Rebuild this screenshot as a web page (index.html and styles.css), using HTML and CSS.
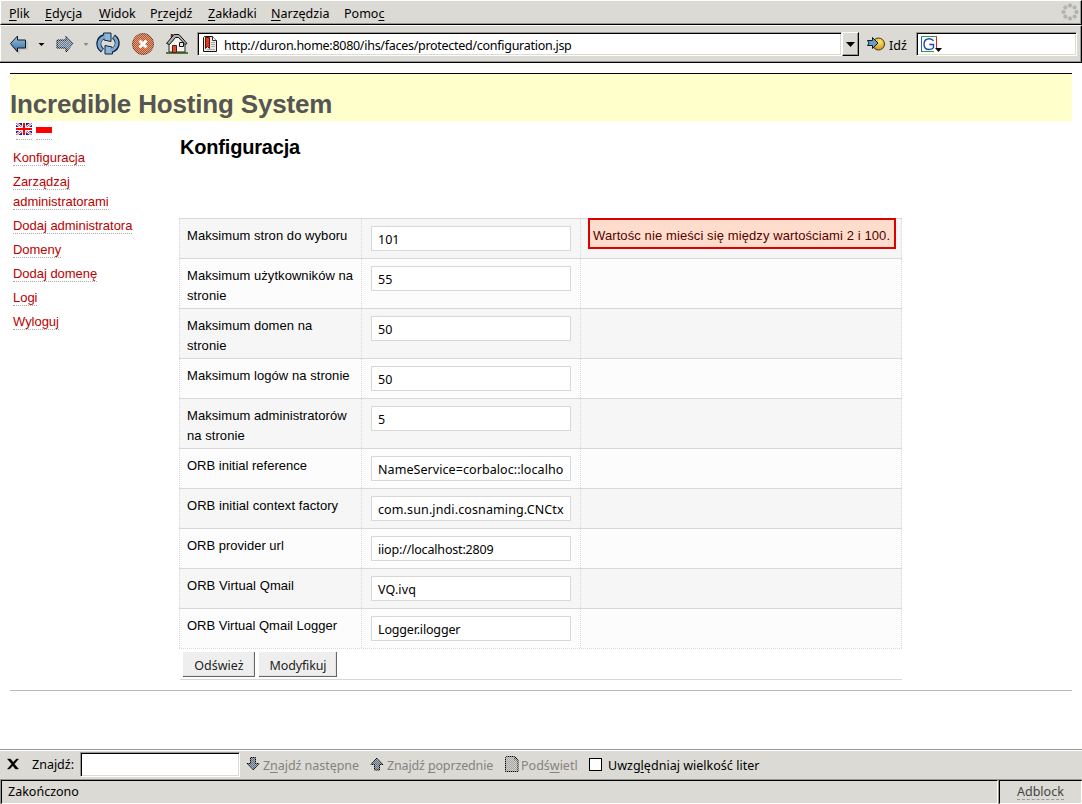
FILE: index.html
```html
<!DOCTYPE html>
<html lang="pl">
<head>
<meta charset="utf-8">
<title>Incredible Hosting System</title>
<link rel="stylesheet" href="styles.css">
</head>
<body>
<nav class="menubar">
  <span class="m1"><u>P</u>lik</span><span class="m2"><u>E</u>dycja</span><span class="m3"><u>W</u>idok</span><span class="m4">P<u>r</u>zejdź</span><span class="m5"><u>Z</u>akładki</span><span class="m6"><u>N</u>arzędzia</span><span class="m7">Pomo<u>c</u></span>
  <svg class="throbber" width="18" height="18" viewBox="0 0 18 18" fill="#b6b6b3" stroke="#a5a5a2" stroke-width=".6"><circle cx="9" cy="2.500" r="1.700"/><circle cx="13.600" cy="4.400" r="1.700"/><circle cx="15.500" cy="9" r="1.700"/><circle cx="13.600" cy="13.600" r="1.700"/><circle cx="9" cy="15.500" r="1.700"/><circle cx="4.400" cy="13.600" r="1.700"/><circle cx="2.500" cy="9" r="1.700"/><circle cx="4.400" cy="4.400" r="1.700"/></svg>
</nav>
<div class="toolbar">
  <svg class="icons" width="190" height="32" viewBox="0 28 190 32">
    <defs>
      <pattern id="dots" width="2" height="2" patternUnits="userSpaceOnUse"><path fill="#dcdad5" shape-rendering="crispEdges" d="M0 0h1v1H0zM1 1h1v1H1z"/></pattern>
      <linearGradient id="blue" x1="0" y1="0" x2="0" y2="1"><stop offset="0" stop-color="#a4c6e4"/><stop offset=".5" stop-color="#6797c3"/><stop offset="1" stop-color="#3c6a9c"/></linearGradient>
    </defs>
    <path d="M12 46l7 7v-4h8v-8" fill="none" stroke="#c4c2be" stroke-width="1.500"/>
    <path d="M10.500 43.500l7-7.500v4h8v8h-8v4z" fill="url(#blue)" stroke="#101820"/>
    <path d="M38.500 43h6l-3 3z" fill="#000"/>
    <path d="M73 43.500l-7-7.500v4h-9v8h9v4z" fill="#5d7c9c" stroke="#000"/>
    <path d="M56 35h18v18H56z" fill="url(#dots)" opacity=".7"/>
    <path d="M83.500 43h5l-2.500 3z" fill="#888"/>
    <g fill="none">
      <path d="M102.500 50.500C97 46.500 97.500 38.500 104.500 36.500M113.500 36.500C119 40.500 118.500 48.500 111.500 50.500" stroke="#10243c" stroke-width="5"/>
      <path d="M103.500 33l7.500 0v8.500l-7-1.500zM112.500 54l-7.500 0v-8.500l7 1.500z" fill="#8fb6da" stroke="#10243c"/>
      <path d="M102 50C97.500 46 98 38.800 105.500 36.500M114 37C118.500 41 118 48.200 110.500 50.500" stroke="#7ba7d0" stroke-width="3"/>
    </g>
    <circle cx="143" cy="44" r="10.500" fill="#c4501e" stroke="#62301e"/>
    <path d="M132 33h22v22h-22z" fill="url(#dots)" opacity=".6"/>
    <path d="M139.500 40.500l7 7m0-7l-7 7" stroke="#fff" stroke-width="3"/>
    <path d="M166 52h22v2h-22z" fill="#54793a"/>
    <path d="M169 43v9h16v-9l-7-8z" fill="#f5f4ef" stroke="#222"/>
    <path d="M172 34v7" stroke="#6b2c1b" stroke-width="2.500"/>
    <path d="M166.500 43.500l7.500-9h5l8 9-2 1-6.500-7h-3l-6 7z" fill="#aaa" stroke="#111"/>
    <path d="M172.500 45.500h4v7h-4z" fill="#d8502f" stroke="#521"/>
    <path d="M179.500 42.500h4v4h-4z" fill="#dfe8ef" stroke="#111"/>
  </svg>
  <div class="url sunken">
    <svg width="14" height="16" viewBox="0 0 14 16"><path d="M.5 1.500l1-1h8l4 4v11H.5z" fill="#e9e9e6" stroke="#111"/><path d="M9.500.5v4h4" fill="#fff" stroke="#333"/><path d="M2.500 1.500h4v11l-2-2-2 2z" fill="#e5361d" stroke="#58150c"/><path d="M8 6.500h4M8 8.500h4M8 10.500h4M4 13.500h8" stroke="#aaa"/></svg>
    <span>http://duron.home:8080/ihs/faces/protected/configuration.jsp</span>
  </div>
  <div class="drop"><svg width="9" height="5" viewBox="0 0 9 5"><path d="M0 0h9L4.500 5z"/></svg></div>
  <svg class="goicon" width="20" height="16" viewBox="0 0 20 16"><defs><radialGradient id="gold" cx=".6" cy=".3" r=".8"><stop offset="0" stop-color="#ffe66e"/><stop offset="1" stop-color="#c98b12"/></radialGradient></defs><circle cx="11.500" cy="8" r="6" fill="url(#gold)" stroke="#4a3608"/><path d="M.5 4.500h5v-3l5.500 5.500-5.500 5.500v-3h-5l1.500-2.500z" fill="#6f9dc8" stroke="#0c1c2c"/></svg>
  <span class="golabel">Idź</span>
  <div class="search sunken"><svg width="24" height="18" viewBox="0 0 24 18"><path d="M.5 16V.5" fill="none" stroke="#2f58c8"/><path d="M.5.5H16M.5 15.500H13" fill="none" stroke="#2fa22f"/><path d="M15.500 1v11" stroke="#e02020"/><path d="M12.500 5C11.500 3.300 10 2.800 8.500 2.800 5 2.800 3 5 3 8.200s2 5.300 5.300 5.300c2.200 0 3.500-.8 4.200-1.800V8.500H8.300" fill="none" stroke="#2447b5" stroke-width="1.400"/><path d="M14 12h7l-3.500 4z"/></svg></div>
</div>
<div class="page">
  <header><h1>Incredible Hosting System</h1></header>
  <div class="cols">
    <aside>
      <div class="flags">
        <a><svg width="16" height="12" viewBox="0 0 16 12"><path fill="#1c1c94" d="M0 0h16v12H0z"/><path d="M0 0l16 12M16 0L0 12" stroke="#fff" stroke-width="2.600"/><path d="M0 0l16 12M16 0L0 12" stroke="#e01515" stroke-width=".8"/><path d="M8 0v12M0 6h16" stroke="#fff" stroke-width="4"/><path d="M8 0v12M0 6h16" stroke="#f00" stroke-width="2"/></svg></a>
        <a><svg width="16" height="12" viewBox="0 0 16 12"><path fill="#fff" d="M0 0h16v4H0z"/><path fill="#f00" d="M0 4h16v6H0z"/></svg></a>
      </div>
      <ul>
        <li><a>Konfiguracja</a></li><li><a>Zarządzaj administratorami</a></li><li><a>Dodaj administratora</a></li><li><a>Domeny</a></li><li><a>Dodaj domenę</a></li><li><a>Logi</a></li><li><a>Wyloguj</a></li>
      </ul>
    </aside>
    <main>
      <h2>Konfiguracja</h2>
      <div class="table">
        <div class="row"><label>Maksimum stron do wyboru</label><div><span class="field">101</span></div><div><p class="error">Wartośc nie mieści się między wartościami 2 i 100.</p></div></div>
        <div class="row tall"><label>Maksimum użytkowników na stronie</label><div><span class="field">55</span></div><div></div></div>
        <div class="row tall"><label>Maksimum domen na<br>stronie</label><div><span class="field">50</span></div><div></div></div>
        <div class="row"><label>Maksimum logów na stronie</label><div><span class="field">50</span></div><div></div></div>
        <div class="row tall"><label>Maksimum administratorów na stronie</label><div><span class="field">5</span></div><div></div></div>
        <div class="row"><label class="tight">ORB initial reference</label><div><span class="field wide">NameService=corbaloc::localho</span></div><div></div></div>
        <div class="row"><label>ORB initial context factory</label><div><span class="field wider">com.sun.jndi.cosnaming.CNCtx</span></div><div></div></div>
        <div class="row"><label class="tight">ORB provider url</label><div><span class="field narrow">iiop://localhost:2809</span></div><div></div></div>
        <div class="row"><label>ORB Virtual Qmail</label><div><span class="field wider">VQ.ivq</span></div><div></div></div>
        <div class="row"><label class="tight">ORB Virtual Qmail Logger</label><div><span class="field narrow">Logger.ilogger</span></div><div></div></div>
      </div>
      <div class="actions"><button class="b1">Odśwież</button><button class="b2">Modyfikuj</button></div>
    </main>
  </div>
</div>
<div class="findbar">
  <svg class="close" width="12" height="12" viewBox="0 0 12 12"><path d="M.5 1h3l2.700 3.300L9.500 1h2L7.300 6l4.200 5h-3L5.800 7.700 2.500 11h-2L4.700 6z" stroke="#000" stroke-width=".4"/></svg>
  <span class="fl">Znajdź:</span>
  <span class="find sunken"></span>
  <svg class="fi1" width="14" height="14" viewBox="0 0 14 14"><defs><pattern id="grain" width="2" height="2" patternUnits="userSpaceOnUse"><path fill="#dcdad5" shape-rendering="crispEdges" d="M0 0h1v1H0zM1 1h1v1H1z"/></pattern></defs><path d="M4.500.5h5v6h3.500L7 13 1 6.500h3.500z" fill="#5a7389" stroke="#000"/><path d="M0 0h14v14H0z" fill="url(#grain)" opacity=".6"/></svg>
  <span class="dim f1">Z<u>n</u>ajdź następne</span>
  <svg class="fi2" width="14" height="14" viewBox="0 0 14 14"><path d="M4.500 13h5V7.500H13L7 1 1 7.500h3.500z" fill="#5a7389" stroke="#000"/><path d="M0 0h14v14H0z" fill="url(#grain)" opacity=".6"/></svg>
  <span class="dim f2">Znajdź <u>p</u>oprzednie</span>
  <svg class="fi3" width="14" height="16" viewBox="0 0 14 16"><path d="M.5 1.500l1-1h8l3.500 3.500v11.500H.5z" fill="#aaa" stroke="#000"/><path d="M9.500.5V4H13" fill="none" stroke="#555"/><path d="M0 0h14v16H0z" fill="url(#grain)" opacity=".7"/></svg>
  <span class="dim f3">Podś<u>w</u>ietl</span>
  <span class="check"></span>
  <span class="f4">Uwzg<u>l</u>ędniaj wielkość liter</span>
</div>
<footer class="status"><div class="msg">Zakończono</div><div class="adb"><span>Adblock</span></div></footer>
</body>
</html>
```
FILE: styles.css
```css
* { box-sizing: border-box; }
body {
  margin: 0; width: 1082px; height: 804px; overflow: hidden;
  display: flex; flex-direction: column; background: #fff; color: #000;
  font: 12.5px/20px "Noto Sans", sans-serif;
}
svg { display: block; flex: none; }
u { text-decoration: underline; text-underline-offset: 2px; text-decoration-thickness: 1px; text-decoration-skip-ink: none; }
.menubar {
  height: 25px; flex: none; display: flex; align-items: flex-start; padding: 3px 3px 0 8px; white-space: nowrap;
  background: #dcdad5; border: 1px solid; border-color: #fff #000 #000 #fff;
  box-shadow: inset -1px -1px #9a9892;
}
.m1 { width: 36px; } .m2 { width: 54px; } .m3 { width: 51px; } .m4 { width: 58px; }
.m5 { width: 63px; } .m6 { width: 73px; } .m7 { width: 50px; }
.throbber { margin: -1px -1px 0 auto; }
.toolbar {
  height: 38px; flex: none; display: flex; align-items: flex-start; padding-top: 6px;
  background: #dcdad5; border: solid; border-width: 1px 1px 1px 0; border-color: #fff #000 #000;
  box-shadow: inset -1px -1px #9a9892, inset 1px 0 #fff;
}
.icons { margin: -4px 7px 0 0; }
.sunken { background: #fff; border: 1px solid; border-color: #9a9892 #fff #fff #9a9892; box-shadow: inset 1px 1px #000, inset -1px -1px #dcdad5; }
.url { width: 645px; height: 24px; display: flex; padding: 3px 0 0 5px; }
.url span { margin-left: 7px; line-height: 19px; white-space: nowrap; letter-spacing: -.28px; }
.drop {
  width: 17px; height: 24px; display: flex; justify-content: center; align-items: center;
  background: #dcdad5; border: 1px solid; border-color: #fff #000 #000 #fff; box-shadow: inset -1px -1px #9a9892;
}
.goicon { margin: 4px 0 0 8px; }
.golabel { width: 29px; margin-top: 4px; padding-left: 2px; }
.search { width: 161px; height: 24px; padding: 3px 0 0 4px; }

.page { flex: 1; padding: 10px 10px 0; font: 13px/20px "Liberation Sans", sans-serif; }
header { height: 48px; background: #ffc; border-top: 1px solid #000; }
h1 { margin: 0; padding-top: 15px; font-size: 26px; line-height: 30px; color: #555; letter-spacing: -.17px; }
.cols { display: flex; height: 570px; border-bottom: 1px solid #bbb; }
aside { width: 169px; padding-left: 3px; }
.flags { display: flex; gap: 4px; padding: 2px 0 0 3px; }
.flags a { height: 17px; border-bottom: 1px dotted #aaa; }
ul { list-style: none; margin: 8px 0 0; padding: 0; width: 140px; letter-spacing: -.03px; }
li { margin-bottom: 4px; }
li a { color: #b00; border-bottom: 1px dotted #aaa; }
main { width: 723px; }
h2 { margin: 0 0 56px 1px; padding-top: 12px; font-size: 20px; line-height: 29px; letter-spacing: -.19px; }
.table { width: 723px; border-bottom: 1px dotted #d8d8d8; }
.row { display: grid; grid-template-columns: 182px 219px 322px; height: 40px; background: #fcfcfc; border-top: 1px solid #d8d8d8; }
.row.tall { height: 50px; }
.row:nth-child(odd) { background: #f6f6f6; }
.row > * { border-left: 1px dotted #d8d8d8; padding: 7px 7px 0; }
.row > :last-child { border-right: 1px dotted #d8d8d8; }
.row > label { padding-right: 0; letter-spacing: .06px; }
.row > label.tight { letter-spacing: 0; }
.field {
  display: block; width: 200px; height: 25px; margin-left: 2px; padding: 2.5px 0 0 6px; overflow: hidden; white-space: nowrap;
  background: #fff; border: 1px solid #d8d8d8; font: 12.5px/20px "Noto Sans", sans-serif;
}
.wide { letter-spacing: .07px; }
.wider { letter-spacing: .12px; }
.narrow { letter-spacing: -.17px; }
.error { margin: -8px 0 0; width: 308px; height: 31px; padding: 6px 0 0 3px; line-height: 20px; letter-spacing: .1px; background: #fdc; border: 2px solid #d00; color: #500; white-space: nowrap; }
.actions { display: flex; gap: 4px; height: 31px; margin-left: 1px; padding: 3px 0 0 3px; border-bottom: 1px solid #d8d8d8; }
button {
  height: 25px; padding: 4px 0 0 1px; background: #eee; color: #222; border: solid; border-width: 0 1px 1px 0; border-color: #666;
  box-shadow: inset -1px -1px #e2e2e2; font: 12.5px/20px "Noto Sans", sans-serif;
}
.b1 { width: 72px; } .b2 { width: 78px; letter-spacing: -.15px; }

.findbar {
  height: 30px; flex: none; display: flex; align-items: flex-start; padding-top: 1px; white-space: nowrap;
  background: #dcdad5; border-top: 1px solid #9a9892; box-shadow: inset 0 1px #fff;
}
.close { margin: 7px 0 0 7px; }
.fl { margin: 4px 0 0 13px; width: 48px; }
.find { width: 160px; height: 25px; margin-top: 1px; }
.dim { color: #85837f; margin-top: 5px; }
.fi1 { margin: 6px 3px 0 6px; } .fi2 { margin: 6px 3px 0 2px; } .fi3 { margin: 5px 2px 0 1px; }
.f1 { width: 105px; letter-spacing: -.05px; } .f2 { width: 117px; letter-spacing: -.15px; } .f3 { width: 68px; }
.check { width: 13px; height: 13px; margin-top: 7px; background: #fff; border: 1px solid #000; }
.f4 { margin: 5px 0 0 6px; letter-spacing: .02px; }
.status { height: 25px; flex: none; display: flex; background: #dcdad5; border-top: 1px solid #9a9892; }
.msg, .adb { padding-top: 1px; border: 1px solid; border-color: #000 #fff #fff #000; box-shadow: -1px 0 #9a9892; }
.msg { margin-left: 1px; width: 997px; padding-left: 6px; }
.adb { margin-left: 1px; width: 83px; padding-left: 17px; color: #444; }
.adb span { display: inline-block; height: 18px; border-bottom: 1px dashed #999; }
```
